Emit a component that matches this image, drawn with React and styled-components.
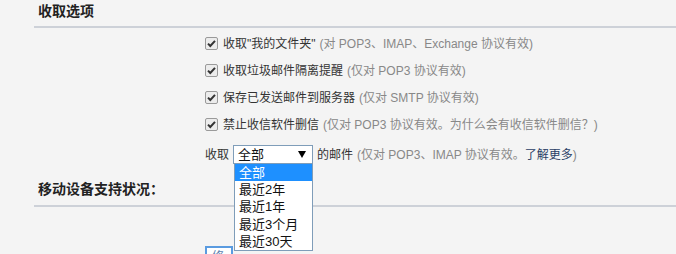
import React from "react";
import styled, { createGlobalStyle } from "styled-components";

const Global = createGlobalStyle`
  html, body { margin: 0; padding: 0; background: #f4f4f4; }
  body { font-family: "Liberation Sans", "Noto Sans CJK SC", sans-serif; font-size: 12px; color: #333; overflow: hidden; }
`;

const Page = styled.div`
  width: 676px;
  height: 254px;
  overflow: hidden;
  padding-left: 34px;
  box-sizing: border-box;
`;

const Heading = styled.div`
  height: ${(p) => p.$h}px;
  box-sizing: border-box;
  display: flex;
  align-items: flex-end;
  padding: 0 0 ${(p) => p.$pb}px 4px;
  border-bottom: 2px solid #cdd1d8;
  font-size: 14px;
  font-weight: bold;
  color: #222;
  line-height: 16px;
`;

const Options = styled.div`
  padding-left: 171px;
  display: flex;
  flex-direction: column;
`;

const Row = styled.div`
  height: ${(p) => p.$h || 27}px;
  display: flex;
  align-items: center;
  white-space: nowrap;
  line-height: 16px;
  position: relative;
`;

const Box = styled.span`
  width: 13px;
  height: 13px;
  margin-right: 5px;
  display: inline-flex;
  flex: none;
`;

const Label = styled.span`
  color: #333;
`;

const Note = styled.span`
  color: #888;
  margin-left: 4px;
`;

const Link = styled.span`
  color: #2b3f66;
`;

const SelectWrap = styled.div`
  position: relative;
  margin: 0 4px 0 4px;
`;

const SelectBox = styled.div`
  width: 80px;
  height: 19px;
  box-sizing: border-box;
  border: 1px solid #7f9db9;
  background: #fff;
  display: flex;
  align-items: center;
  justify-content: space-between;
  padding: 0 6px 0 4px;
  color: #111;
  font-size: 13px;
`;

const Arrow = styled.span`
  width: 0;
  height: 0;
  border-left: 4px solid transparent;
  border-right: 4px solid transparent;
  border-top: 7px solid #000;
`;

const Menu = styled.div`
  position: absolute;
  left: 1px;
  top: 18px;
  width: 79px;
  box-sizing: border-box;
  border: 1px solid #7f9db9;
  background: #fff;
  z-index: 5;
`;

const Item = styled.div`
  height: 17.2px;
  line-height: 17px;
  padding-left: 4px;
  font-size: 13px;
  color: ${(p) => (p.$active ? "#fff" : "#111")};
  background: ${(p) => (p.$active ? "#1e90ff" : "#fff")};
`;

const Footer = styled.div`
  padding: 39px 0 0 171px;
`;

const SmallButton = styled.div`
  width: 28px;
  height: 20px;
  box-sizing: border-box;
  border: 2px solid #5a9be0;
  background: #fff;
  font-size: 12px;
  color: #5a7fb0;
  padding-left: 5px;
  line-height: 18px;
`;

const Check = () => (
  <Box>
    <svg width="13" height="13" viewBox="0 0 13 13">
      <rect x="0.5" y="0.5" width="12" height="12" rx="1.5" fill="#ececec" stroke="#9a9a9a" />
      <path d="M3 6.6 L5.3 9 L10 3.8" fill="none" stroke="#333" strokeWidth="2" />
    </svg>
  </Box>
);

const options = [
  ['收取"我的文件夹"', "(对 POP3、IMAP、Exchange 协议有效)"],
  ["收取垃圾邮件隔离提醒", "(仅对 POP3 协议有效)"],
  ["保存已发送邮件到服务器", "(仅对 SMTP 协议有效)"],
  ["禁止收信软件删信", "(仅对 POP3 协议有效。为什么会有收信软件删信？)"],
];

const items = ["全部", "最近2年", "最近1年", "最近3个月", "最近30天"];

export default function App() {
  return (
    <Page>
      <Global />
      <Heading $h={28} $pb={7}>收取选项</Heading>
      <Options>
        <Row $h={2} />
        {options.map(([a, b]) => (
          <Row key={a}>
            <Check />
            <Label>{a}</Label>
            <Note>{b}</Note>
          </Row>
        ))}
        <Row $h={33}>
          <Label>收取</Label>
          <SelectWrap>
            <SelectBox>
              <span>全部</span>
              <Arrow />
            </SelectBox>
            <Menu>
              {items.map((t, i) => (
                <Item key={t} $active={i === 0}>{t}</Item>
              ))}
            </Menu>
          </SelectWrap>
          <Label>的邮件</Label>
          <Note>
            (仅对 POP3、IMAP 协议有效。<Link>了解更多</Link>)
          </Note>
        </Row>
      </Options>
      <Heading $h={36} $pb={8}>移动设备支持状况：</Heading>
      <Footer>
        <SmallButton>修</SmallButton>
      </Footer>
    </Page>
  );
}
